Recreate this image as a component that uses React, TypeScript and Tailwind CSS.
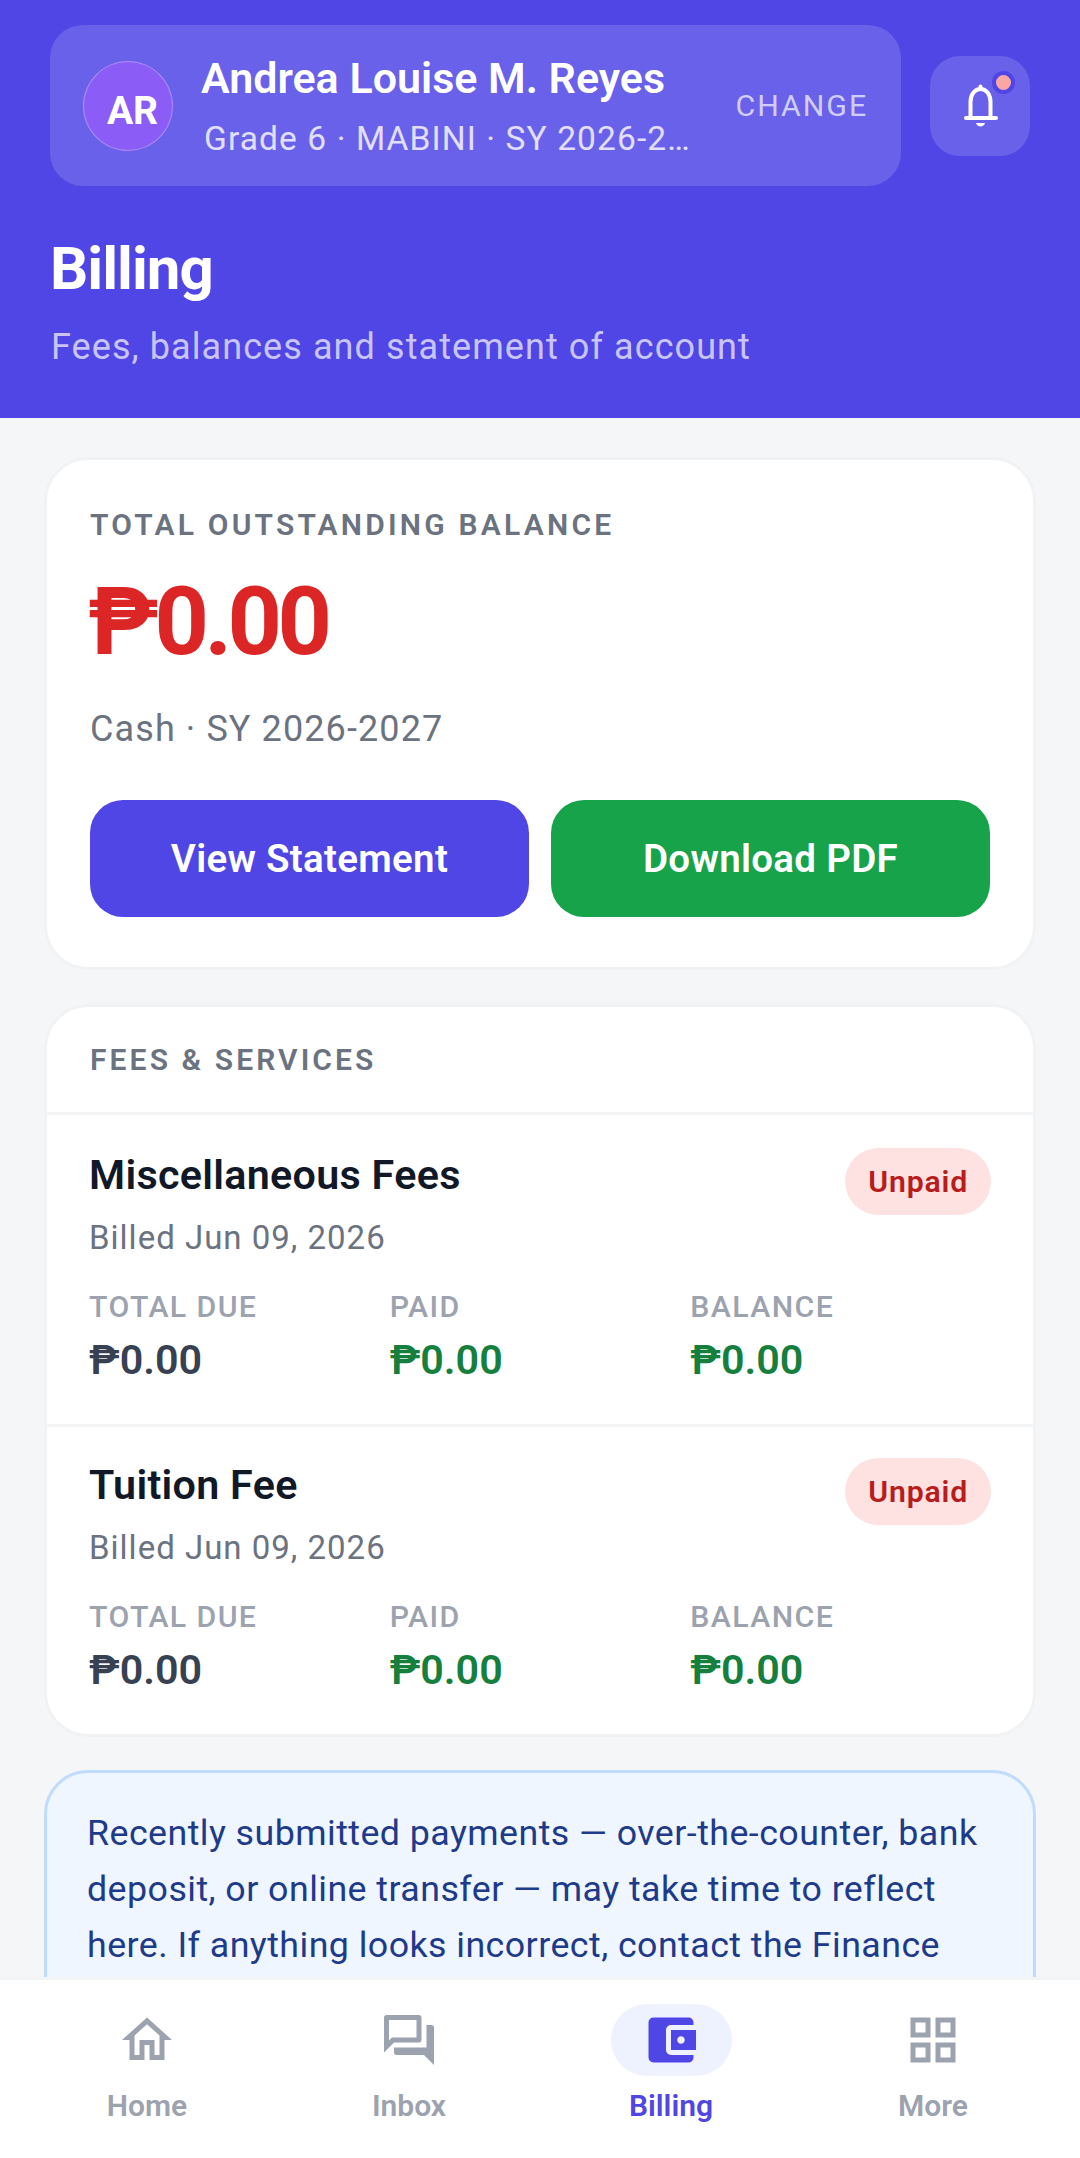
import React from "react";
import { MdOutlineHome, MdOutlineForum, MdAccountBalanceWallet, MdOutlineGridView } from "react-icons/md";

function FeeRow({ title, first }: { title: string; first?: boolean }) {
  return (
    <div className={"px-[42px] " + (first ? "h-[312px] pt-[33px] border-b-[3px] border-[#f3f4f6]" : "pt-[31px]")}>
      <div className="flex justify-between items-start">
        <div>
          <div className="text-[41.25px] leading-[55px] tracking-[0.3px] font-semibold text-[#111827]">{title}</div>
          <div className="text-[33px] leading-[44px] mt-[13px] tracking-[1px] text-[#6b7280]">Billed Jun 09, 2026</div>
        </div>
        <div className="h-[67px] px-[23px] rounded-full bg-[#fee2e2] text-[#b91c1c] text-[30.25px] tracking-[0.8px] font-semibold flex items-center">Unpaid</div>
      </div>
      <div className="grid grid-cols-3 mt-[28px]">
        <Cell label="TOTAL DUE" color="text-[#374151]" />
        <Cell label="PAID" color="text-[#15803d]" />
        <Cell label="BALANCE" color="text-[#15803d]" />
      </div>
    </div>
  );
}

function Cell({ label, color }: { label: string; color: string }) {
  return (
    <div>
      <div className="text-[30.25px] leading-[38px] font-medium tracking-[1.4px] text-[#9ca3af]">{label}</div>
      <div className={"text-[41.25px] leading-[55px] mt-[7px] font-semibold " + color}>₱0.00</div>
    </div>
  );
}

function NavItem({ label, active, children }: { label: string; active?: boolean; children: React.ReactNode }) {
  return (
    <div className="flex flex-col items-center">
      <div className={"w-[121px] h-[72px] rounded-full flex items-center justify-center " + (active ? "bg-[#eef2ff] text-[#4f46e5]" : "text-[#9ca3af]")}>
        {children}
      </div>
      <div className={"text-[30px] leading-[38px] mt-[11px] font-semibold " + (active ? "text-[#4f46e5]" : "text-[#9ca3af]")}>{label}</div>
    </div>
  );
}

export default function App() {
  return (
    <div className="w-[1080px] h-[2158px] flex flex-col overflow-hidden bg-[#f5f6f8] font-['Roboto',sans-serif]">
      <header className="h-[418px] shrink-0 bg-[#4f46e5] pl-[50px] pr-[50px] pt-[25px]">
        <div className="flex items-center">
          <div className="w-[852px] h-[161px] rounded-[33px] bg-white/15 flex items-center pl-[33px] pr-[33px]">
            <div className="w-[90px] h-[90px] rounded-full bg-[#8b5cf6] border border-white/30 flex items-center justify-center pl-[9px] pt-[11px] text-white text-[39px] font-bold shrink-0">AR</div>
            <div className="ml-[28px] flex-1 min-w-0">
              <div className="text-[43px] leading-[55px] pt-[5px] font-semibold text-white">Andrea Louise M. Reyes</div>
              <div className="w-[493px] ml-[3px] mt-[5px] text-[33.5px] leading-[55px] tracking-[1.1px] text-white/80 truncate">Grade 6 · MABINI · SY 2026-2027</div>
            </div>
            <div className="text-[30.25px] tracking-[2px] text-white/70 font-normal">CHANGE</div>
          </div>
          <div className="relative ml-[29px] w-[100px] h-[100px] rounded-[30px] bg-white/15 flex items-center justify-center">
            <svg width="50" height="50" viewBox="0 0 50 50" fill="none" stroke="white" strokeLinecap="round">
              <path d="M15.5 37 V21 C15.5 13 20 8 25.5 8 C31 8 35.5 13 35.5 21 V37" strokeWidth="4" />
              <path d="M11 37 H41" strokeWidth="4" />
              <path d="M25.5 5.5 V8" strokeWidth="4" />
              <path d="M21 42 H30 C29 46.5 22 46.5 21 42 Z" fill="white" stroke="none" />
            </svg>
            <div className="absolute right-[15px] top-[15px] w-[15px] h-[15px] rounded-full bg-[#fca5a5] border-[4px] border-[#4f46e5] box-content"></div>
          </div>
        </div>
        <h1 className="mt-[43px] text-[60px] leading-[80px] font-bold tracking-[-1px] text-white">Billing</h1>
        <p className="mt-[13px] ml-[1px] text-[36px] leading-[50px] tracking-[1.08px] text-white/70">Fees, balances and statement of account</p>
      </header>

      <main className="flex-1 min-h-0 overflow-hidden px-[44px] pt-[39px]">
        <section className="h-[513px] rounded-[44px] bg-white border-[3px] border-[#f1f2f4] px-[43px] pt-[43px]">
          <div className="text-[30px] leading-[44px] font-semibold tracking-[3.2px] text-[#6b7280]">TOTAL OUTSTANDING BALANCE</div>
          <div className="mt-[20px] -ml-[2px] text-[95px] leading-[110px] font-bold text-[#dc2626] tracking-[-4.5px]">₱0.00</div>
          <div className="mt-[27px] text-[36px] leading-[50px] tracking-[1.1px] text-[#6b7280]">Cash · SY 2026-2027</div>
          <div className="mt-[46px] flex gap-[22px]">
            <div className="flex-1 h-[117px] rounded-[33px] bg-[#4f46e5] text-white text-[38.5px] tracking-[0.3px] font-semibold flex items-center justify-center">View Statement</div>
            <div className="flex-1 h-[117px] rounded-[33px] bg-[#16a34a] text-white text-[38.5px] tracking-[0.3px] font-semibold flex items-center justify-center">Download PDF</div>
          </div>
        </section>

        <section className="mt-[34px] h-[733px] rounded-[44px] bg-white overflow-hidden border-[3px] border-[#f1f2f4]">
          <div className="h-[108px] border-b-[3px] border-[#f3f4f6] px-[43px] flex items-center text-[30px] font-semibold tracking-[3.1px] text-[#6b7280]">FEES &amp; SERVICES</div>
          <FeeRow title="Miscellaneous Fees" first />
          <FeeRow title="Tuition Fee" />
        </section>

        <section className="mt-[33px] rounded-[44px] bg-[#eff6ff] border-[3px] border-[#bfdbfe] px-[40px] pt-[32px] pb-[28px] text-[35.75px] leading-[56px] tracking-[0.45px] text-[#1e3a8a]">
          Recently submitted payments — over-the-counter, bank deposit, or online transfer — may take time to reflect here. If anything looks incorrect, contact the Finance Office.
        </section>
      </main>

      <nav className="h-[181px] shrink-0 bg-white border-t-[3px] border-[#f3f4f6] px-[16px] pt-[24px] grid grid-cols-4">
        <NavItem label="Home"><MdOutlineHome size={60} /></NavItem>
        <NavItem label="Inbox"><MdOutlineForum size={60} /></NavItem>
        <NavItem label="Billing" active><MdAccountBalanceWallet size={60} /></NavItem>
        <NavItem label="More"><MdOutlineGridView size={60} /></NavItem>
      </nav>
    </div>
  );
}
